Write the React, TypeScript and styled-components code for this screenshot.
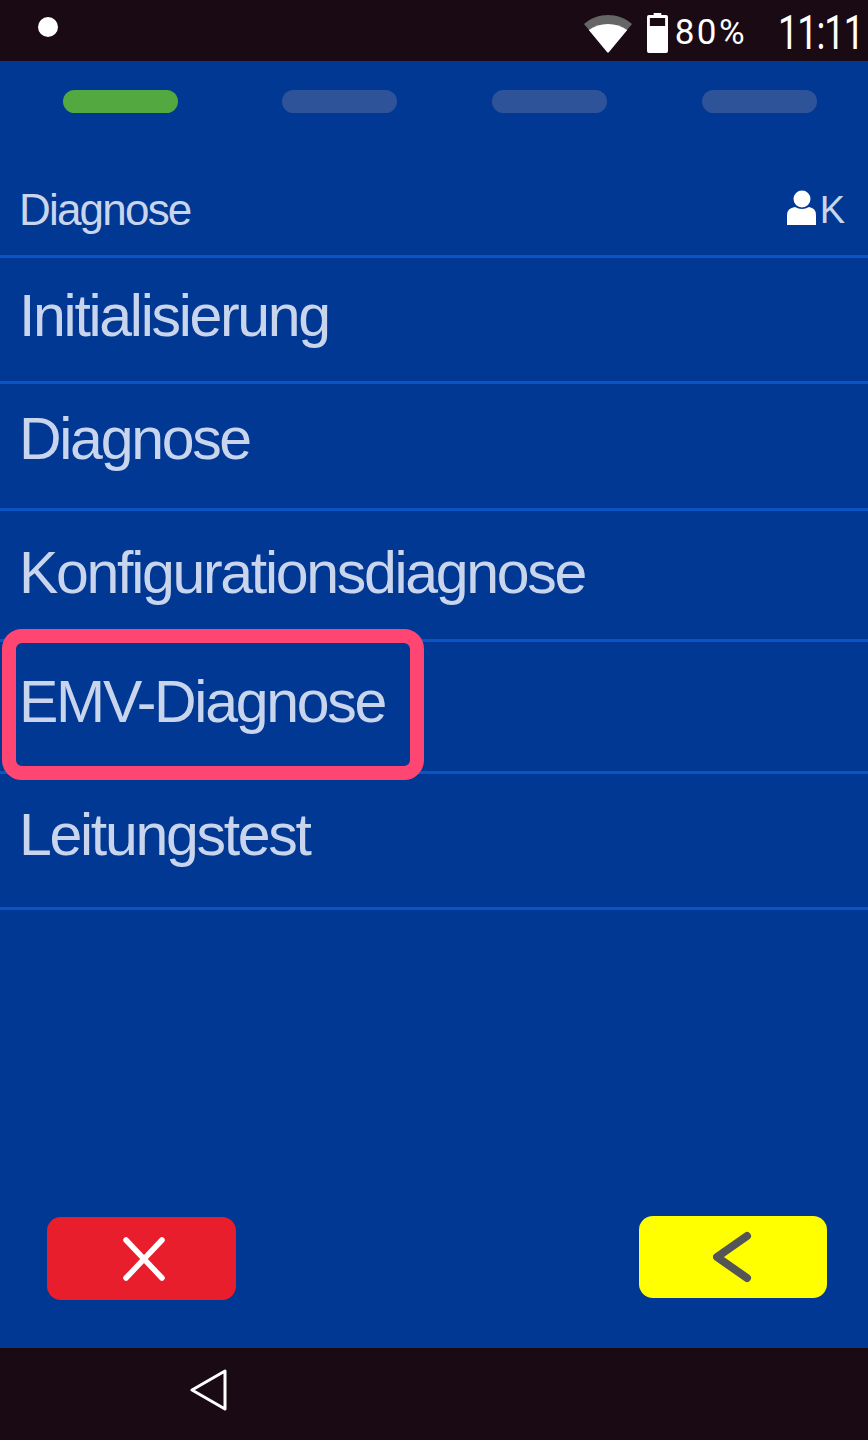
import React from "react";
import styled, { createGlobalStyle } from "styled-components";

const GlobalStyle = createGlobalStyle`
  html, body {
    margin: 0;
    padding: 0;
    background: #003893;
  }
  * {
    box-sizing: border-box;
  }
`;

const Screen = styled.div`
  width: 868px;
  height: 1440px;
  display: flex;
  flex-direction: column;
  background: #003893;
  font-family: "Liberation Sans", Arial, sans-serif;
  overflow: hidden;
`;

const StatusBar = styled.div`
  height: 61px;
  flex: none;
  display: flex;
  align-items: center;
  padding: 0 5px 0 38px;
  background: #1a0a14;
  color: #fff;
`;

const Dot = styled.div`
  width: 20px;
  height: 20px;
  margin-bottom: 7px;
  border-radius: 50%;
  background: #fff;
`;

const StatusRight = styled.div`
  margin-left: auto;
  padding-top: 4px;
  display: flex;
  align-items: center;
`;

const Battery = styled.svg`
  margin-left: 15px;
`;

const Percent = styled.span`
  margin-left: 7px;
  font-family: "Roboto", sans-serif;
  font-size: 35px;
  letter-spacing: 2.4px;
`;

const Clock = styled.span`
  margin-left: 4px;
  font-family: "Roboto", sans-serif;
  font-size: 48px;
  letter-spacing: -1.5px;
  transform: scaleX(0.76);
  transform-origin: right center;
`;

const Steps = styled.div`
  height: 79px;
  flex: none;
  padding: 29px 0 0 63px;
  display: flex;
  gap: 95px;
`;

const Step = styled.div<{ $active?: boolean }>`
  width: 115px;
  height: 23px;
  border-radius: 12px;
  background: ${(p) => (p.$active ? "#53a93f" : "#2f5399")};
  margin-right: ${(p) => (p.$active ? "9px" : "0")};
`;

const Header = styled.div`
  height: 118px;
  flex: none;
  display: flex;
  align-items: center;
  justify-content: space-between;
  padding: 25px 23px 0 19px;
  border-bottom: 3px solid #0a55c4;
  color: #c9d5ec;
  font-size: 44px;
  letter-spacing: -1.8px;
`;

const Operator = styled.div`
  display: flex;
  align-items: center;
  font-size: 38px;
  letter-spacing: 0;
`;

const UserIcon = styled.svg`
  margin: 0 3px 5px 0;
`;

const Row = styled.div<{ $height: number; $lift: number }>`
  height: ${(p) => p.$height}px;
  flex: none;
  display: flex;
  align-items: center;
  padding: 0 0 ${(p) => p.$lift}px 19px;
  border-bottom: 3px solid #0a55c4;
  color: #c9d5ec;
  font-size: 59px;
  letter-spacing: -2.3px;
`;

const Highlight = styled.div`
  position: absolute;
  left: 2px;
  top: 629px;
  width: 422px;
  height: 151px;
  border: 14px solid #ff4672;
  border-radius: 20px;
`;

const Spacer = styled.div`
  flex: 1;
`;

const Actions = styled.div`
  flex: none;
  display: flex;
  justify-content: space-between;
  align-items: flex-start;
  height: 132px;
  padding: 0 41px 0 47px;
`;

const ActionButton = styled.div<{ $bg: string; $offset: number; $width: number; $height: number }>`
  width: ${(p) => p.$width}px;
  height: ${(p) => p.$height}px;
  margin-top: ${(p) => p.$offset}px;
  display: flex;
  align-items: center;
  justify-content: center;
  border-radius: 14px;
  background: ${(p) => p.$bg};
`;

const CloseIcon = styled.svg`
  margin-left: 4px;
`;

const NavBar = styled.div`
  height: 92px;
  flex: none;
  display: flex;
  align-items: center;
  padding: 0 0 8px 190px;
  background: #1a0a14;
`;

const App = () => {
  return (
    <>
      <GlobalStyle />
      <Screen>
        <StatusBar>
          <Dot />
          <StatusRight>
            <svg width="48" height="40" viewBox="0 0 50 40" preserveAspectRatio="none">
              <path d="M0 11 C14 -1 36 -1 50 11 L25 40 Z" fill="#666" strokeLinejoin="round" />
              <path d="M5 17 C16 9 34 9 45 17 L26 39 Q25 40 24 39 Z" fill="#fff" />
            </svg>
            <Battery width="21" height="40" viewBox="0 0 22 40" preserveAspectRatio="none">
              <path d="M7 0 H15 V2 H20 Q22 2 22 4 V38 Q22 40 20 40 H2 Q0 40 0 38 V4 Q0 2 2 2 H7 Z" fill="#fff" />
              <rect x="3" y="5" width="16" height="8" fill="#1a0a14" />
            </Battery>
            <Percent>80%</Percent>
            <Clock>11:11</Clock>
          </StatusRight>
        </StatusBar>
        <Steps>
          <Step $active />
          <Step />
          <Step />
          <Step />
        </Steps>
        <Header>
          Diagnose
          <Operator>
            <UserIcon width="31" height="35" viewBox="0 0 31 35">
              <circle cx="16" cy="9" r="8.5" fill="#fff" />
              <path d="M1 35 V25 Q1 18 9 17 Q16 21 23 17 Q30 18 30 25 V35 Z" fill="#fff" />
            </UserIcon>
            K
          </Operator>
        </Header>
        <Row $height={126} $lift={7}>Initialisierung</Row>
        <Row $height={127} $lift={15}>Diagnose</Row>
        <Row $height={131} $lift={5}>Konfigurationsdiagnose</Row>
        <Row $height={132} $lift={9}>EMV-Diagnose</Row>
        <Row $height={136} $lift={11}>Leitungstest</Row>
        <Spacer />
        <Actions>
          <ActionButton $bg="#e81e2d" $offset={1} $width={189} $height={83}>
            <CloseIcon width="44" height="46" viewBox="0 0 44 46">
              <path d="M4 4 L40 42 M40 4 L4 42" stroke="#fff" strokeWidth="5.5" strokeLinecap="round" />
            </CloseIcon>
          </ActionButton>
          <ActionButton $bg="#ffff00" $offset={0} $width={188} $height={82}>
            <svg width="40" height="52" viewBox="0 0 40 52">
              <path d="M34 5 L4 26 L34 47" fill="none" stroke="#555" strokeWidth="8" strokeLinecap="round" strokeLinejoin="round" />
            </svg>
          </ActionButton>
        </Actions>
        <NavBar>
          <svg width="38" height="42" viewBox="0 0 38 42">
            <path d="M35 2 V40 L2 21 Z" fill="none" stroke="#fff" strokeWidth="3" strokeLinejoin="round" />
          </svg>
        </NavBar>
        <Highlight />
      </Screen>
    </>
  );
};

export default App;
